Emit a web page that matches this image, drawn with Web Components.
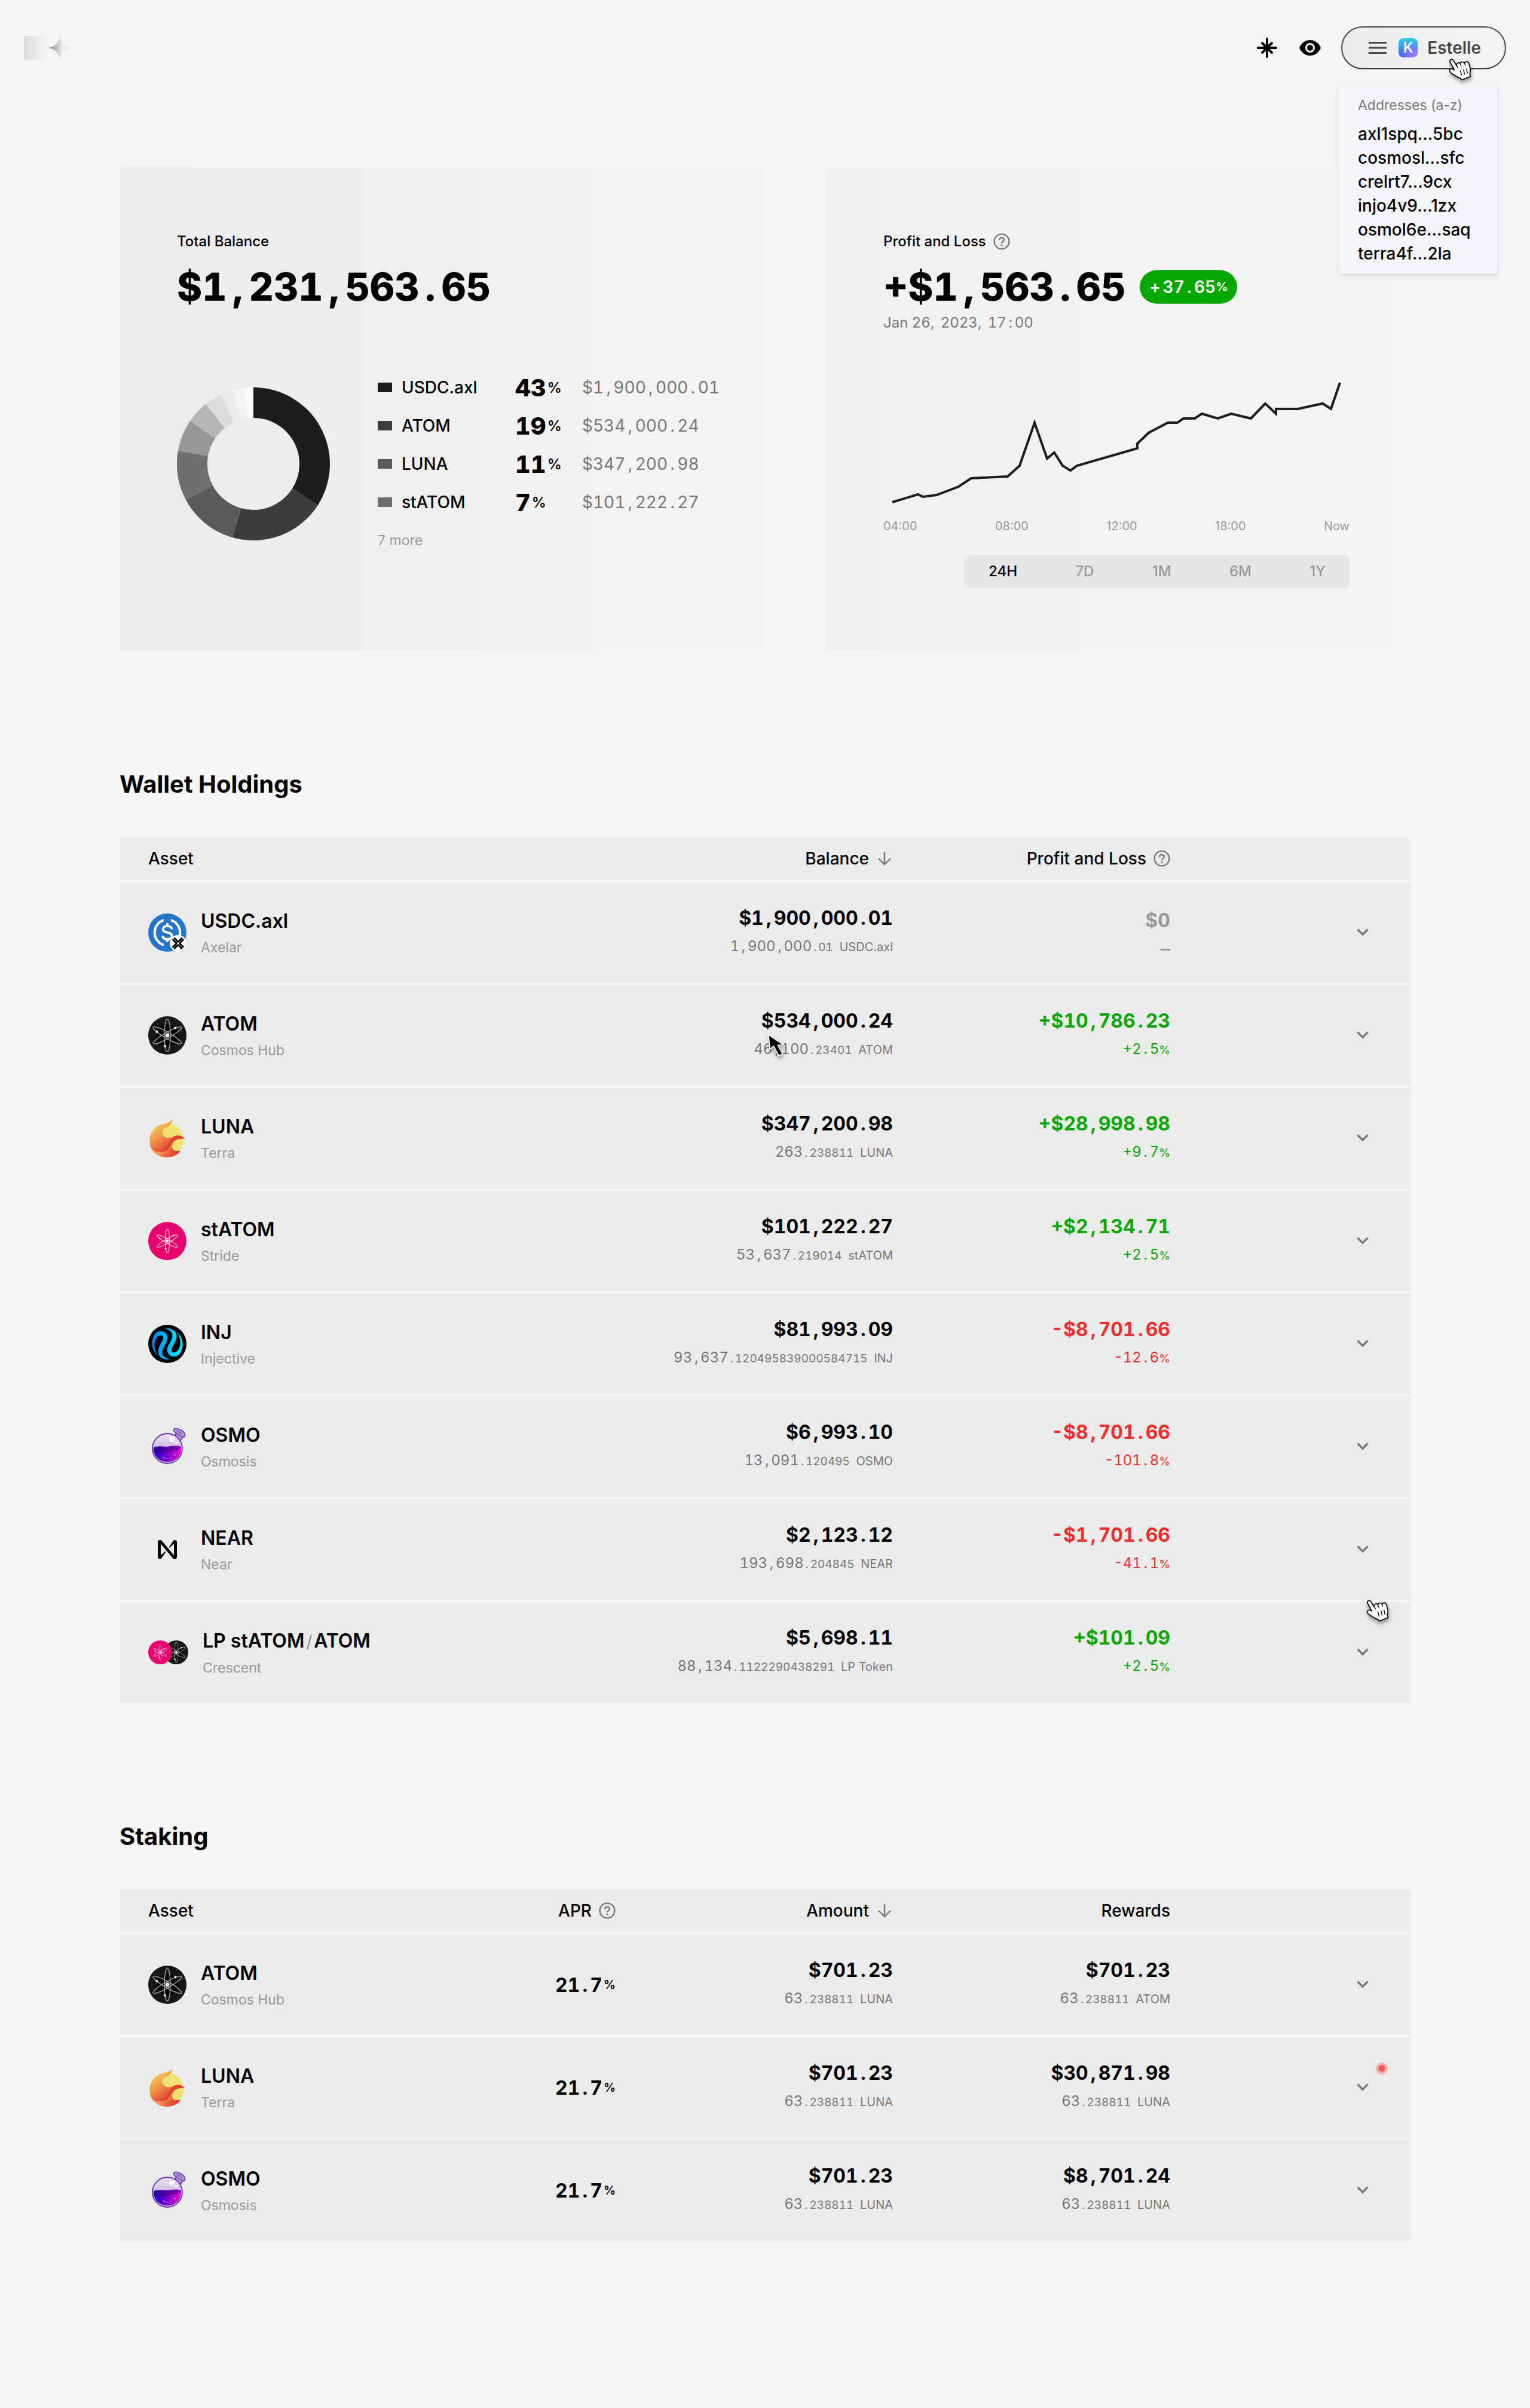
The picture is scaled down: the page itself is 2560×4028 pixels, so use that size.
<!DOCTYPE html>
<html lang="en">
<head>
<meta charset="utf-8">
<meta name="viewport" content="width=device-width, initial-scale=1">
<title>Portfolio dashboard</title>
<style>
  :root {
    --bg: #f5f5f5;
    --panel: #ebebeb;
    --ink: #000;
    --muted: #777;
    --faint: #999;
    --gain: #06a800;
    --loss: #f02d2a;
  }
  body {
    margin: 0;
    background: var(--bg);
    color: var(--ink);
    font-family: Inter, "Liberation Sans", sans-serif;
    font-size: 24px;
  }
</style>
</head>
<body>
<portfolio-page></portfolio-page>

<script>
const reset = `
  *, *::before, *::after { box-sizing: border-box; }
  button { font: inherit; color: inherit; background: none; border: 0; padding: 0; margin: 0; cursor: pointer; }
  svg { display: block; }
  h2, p, ul { margin: 0; padding: 0; }
  ul { list-style: none; }
  .num { font-variant-numeric: tabular-nums; }
  .p { padding: 0 .155em; }
`;

/* Gives points and commas the same cell width as a tabular digit. */
const cells = text => text.replace(/[.,]/g, `<span class="p">$&</span>`);

class BaseElement extends HTMLElement {
  constructor() {
    super();
    this.attachShadow({ mode: "open" });
  }
  connectedCallback() {
    this.shadowRoot.innerHTML = `<style>${reset}${this.css()}</style>${this.html()}`;
  }
  css() { return ""; }
  html() { return ""; }
}

/* ---------- small glyph icons ---------- */
const glyphs = {
  menu: `<svg width="30" height="20" viewBox="0 0 30 20" stroke="currentColor" stroke-width="3"><path d="M0 1.5h30M0 10h30M0 18.5h30"/></svg>`,
  spark: `<svg width="36" height="36" viewBox="0 0 36 36" stroke="currentColor" stroke-width="4" stroke-linecap="round"><path d="M18 3v30M3 18h30M10 10l16 16M26 10L10 26"/></svg>`,
  eye: `<svg width="36" height="26" viewBox="0 0 36 26"><path fill="currentColor" d="M18 0C27 0 33 6 36 13C33 20 27 26 18 26S3 20 0 13C3 6 9 0 18 0z"/><circle cx="18" cy="13" r="8" fill="#f5f5f5"/><circle cx="18" cy="13" r="5" fill="currentColor"/></svg>`,
  help: `<svg width="28" height="28" viewBox="0 0 28 28" fill="none" stroke="currentColor" stroke-width="2.4"><circle cx="14" cy="14" r="12.4"/><path d="M10.2 11.4c0-2.3 1.6-3.7 3.8-3.7s3.8 1.3 3.8 3.4c0 2.8-3.7 2.9-3.7 6"/><circle cx="14.1" cy="20.2" r="1.5" fill="currentColor" stroke="none"/></svg>`,
  down: `<svg width="28" height="28" viewBox="0 0 28 28" fill="none" stroke="currentColor" stroke-width="2.4"><path d="M14 3v20M4 14l10 10 10-10"/></svg>`,
  chevron: `<svg width="20" height="14" viewBox="0 0 20 14" fill="none" stroke="currentColor" stroke-width="3.4"><path d="M1.5 1.5l8.500 8.600L18.500 1.500"/></svg>`,
  hand: `<svg width="38" height="38" viewBox="0 0 114 114" overflow="visible"><path fill="#fff" stroke="#000" stroke-width="5" stroke-linejoin="round" d="M7 18C2 6 16-1 23 9L40 36C37 24 51 15 58 25C59 15 73 13 79 23C83 12 98 13 101 24L108 50C111 62 105 72 106 81L110 90L64 107L59 98C46 96 30 83 18 77C8 70 3 63 5 57C9 49 20 51 28 57z"/><path stroke="#000" stroke-width="4" d="M40 34l7 14M58 25l5 14M79 22l4 13M58 58l7 26M74 54l6 26M89 50l5 25"/></svg>`,
  arrow: `<svg width="28" height="38" viewBox="0 0 28 38" overflow="visible"><path fill="#000" stroke="#fff" stroke-width="1.600" stroke-linejoin="round" d="M1 1L3 25L9.500 20L18 36L24.500 33L16.500 18.500L26 17.500z"/></svg>`
};

customElements.define("ui-glyph", class extends BaseElement {
  css() { return `:host { display: inline-flex; flex: none; align-items: center; justify-content: center; }`; }
  html() { return glyphs[this.getAttribute("name")]; }
});

/* Pointer drawn over the page content. */
customElements.define("ui-pointer", class extends BaseElement {
  css() { return `:host { position: absolute; z-index: 5; pointer-events: none; filter: drop-shadow(1px 4px 3px rgba(0,0,0,.4)); }`; }
  html() { return glyphs[this.getAttribute("name")]; }
});

/* ---------- token logos, drawn on a 64-unit grid ---------- */
const atomLogo = (bg, core, line, ry, rx, w) => `
  <circle cx="32" cy="32" r="32" fill="${bg}"/>
  <circle cx="32" cy="32" r="18.500" fill="${core}"/>
  <g fill="none" stroke="${line}" stroke-width="${w}">
    <ellipse cx="32" cy="32" rx="${rx}" ry="${ry}"/>
    <ellipse cx="32" cy="32" rx="${rx}" ry="${ry}" transform="rotate(60 32 32)"/>
    <ellipse cx="32" cy="32" rx="${rx}" ry="${ry}" transform="rotate(120 32 32)"/>
  </g>
  <g fill="#fff" transform="translate(32 32) scale(${ry / 27.5})">
    <circle r="3.400"/><circle cx="-17.700" cy="-6" r="2"/><circle cx="13.400" cy="-12.600" r="2"/><circle cx="-4" cy="18" r="2"/>
  </g>`;
const injHalf = `M17 52.500C9 46 6.500 38 6.500 31C7 18 13 10.700 21 10.700C28 10.700 32.500 16 32.300 22C32 31 24 36 23.500 46C23.500 52 28 56 36.500 57.500C26 60 16.500 54 16.500 45C17 33 25 29 25 21.500C25 18.500 23 17.500 20.500 17.700C14 18 9.500 27 10.500 36C11 43 13 48 17 52.500z`;
const tokens = {
  usdc: `<circle cx="32" cy="32" r="32" fill="#2775ca"/>
    <g fill="none" stroke="#fff" stroke-width="4">
      <path d="M26 11.200A21.800 21.800 0 0 0 26 52.800M38 11.200A21.800 21.800 0 0 1 38 52.800"/>
      <path d="M39.400 26.500C39.400 23 36.500 21 32 21S24.700 23.200 24.700 26.400C24.700 30 28 31 32 31.800S39.800 33.700 39.800 37.700C39.800 41.300 36.400 43 32 43S24.200 41.300 24.200 37.500M32 16v5M32 43v5"/>
    </g>
    <circle cx="50" cy="50.600" r="14.400" fill="#000" opacity=".12"/>
    <circle cx="50" cy="50" r="14" fill="#fff"/>
    <path d="M42 42l16 16M58 42L42 58" stroke="#000" stroke-width="6.500" fill="none"/>
    <path d="M41 41l18 18M59 41L41 59" stroke="#fff" stroke-width=".8" fill="none"/>
    <circle cx="50" cy="50" r="1.400" fill="#fff"/>`,
  atom: atomLogo("#171717", "#000", "#a9a9a9", 27.5, 5, 1.4),
  statom: atomLogo("#e6056f", "#e6056f", "#ffd3e8", 20, 3.7, 1.1),
  luna: `<defs>
      <linearGradient id="la" x1="8" y1="10" x2="36" y2="52" gradientUnits="userSpaceOnUse"><stop offset="0" stop-color="#f6cf5c"/><stop offset=".5" stop-color="#ef8f45"/><stop offset="1" stop-color="#e03131"/></linearGradient>
      <linearGradient id="lb" x1="22" y1="50" x2="40" y2="64" gradientUnits="userSpaceOnUse"><stop offset="0" stop-color="#f19a50"/><stop offset="1" stop-color="#e4402f"/></linearGradient>
    </defs>
    <circle cx="31" cy="35.500" r="28.300" fill="#f2e272"/>
    <path fill="url(#la)" d="M39.500 0C38 5 29 7 20 9.500C9 14 2.300 24 2.300 36C2.300 42 3.500 47 6.500 51.500C14 57 25 56 30 53C36 49 38 40 45 35.500C50 33 56 32 61.500 33C57 28 49 26 44 28.500C38 32 30 32 26.500 28.500C22 24 23 18 28 15C33 12.500 42 9 39.500 0z"/>
    <path fill="url(#lb)" d="M6.500 51.500C14 57 25 56 30 53C36 49 38 41 44 36C38 43 39 53 47 53C50 53 52 53 54.500 52.200C50 60 40 64 31 64C20 64 11.500 59 6.500 51.500z"/>
    <path fill="#e0332f" opacity=".6" d="M32 44C36 36 40 31 45 28C50 26 57 28 61.500 33C56 32 50 33 45 35.500C38 40 36 49 30 53z"/>`,
  inj: `<defs><linearGradient id="ig" x1="6" y1="32" x2="58" y2="32" gradientUnits="userSpaceOnUse"><stop offset="0" stop-color="#0082ff"/><stop offset="1" stop-color="#00f2fe"/></linearGradient></defs>
    <circle cx="32" cy="32" r="32"/>
    <path fill="url(#ig)" d="${injHalf}"/>
    <mask id="im"><path d="${injHalf}" fill="#fff" transform="rotate(180 32 32)"/></mask>
    <rect width="64" height="64" fill="url(#ig)" mask="url(#im)"/>`,
  osmo: `<defs>
      <linearGradient id="og" x1="0" x2="1"><stop offset="0" stop-color="#1500d6"/><stop offset=".5" stop-color="#7a06cd"/><stop offset="1" stop-color="#f000c8"/></linearGradient>
      <linearGradient id="oh" x1="0" y1="0" x2="0" y2="1"><stop offset="0" stop-color="#efe6f8"/><stop offset="1" stop-color="#a78cc8"/></linearGradient>
      <linearGradient id="ok" x1="0" x2="1"><stop offset="0" stop-color="#25009c"/><stop offset="1" stop-color="#8a00b0"/></linearGradient>
    </defs>
    <path d="M44 1.500C49 0 60 6 61.500 11C62.500 15 59.500 17 57.500 15.500L54 22L44 16L46.500 9C43 8 41 4 44 1.500z" fill="#b39ad4" stroke="#6b2fb0" stroke-width="1.600" stroke-linejoin="round"/>
    <path d="M46 4C50 4 57 8 58.500 12C54 11 48 8 46 4z" fill="#8d6bbd"/>
    <path d="M46.500 9C50 12 54 14.500 57.500 15.500" fill="none" stroke="#6b2fb0" stroke-width="1.400"/>
    <circle cx="32" cy="35" r="25" fill="url(#oh)" stroke="#6b2fb0" stroke-width="1.800"/>
    <path fill="url(#og)" d="M9 33C16 31 22 32 30 34C40 35 47 31 55 33C56 47 46 57 32 57S8.500 47 9 33z"/>
    <path fill="url(#ok)" d="M9 33C16 31 22 31 30 32C40 31 47 29 55 32C52 41 42 37 34 41C24 45 13 43 9 39z"/>
    <path fill="none" stroke="#b9a9cf" stroke-width="1.600" opacity=".8" d="M16 53C24 60 40 60 48 53"/>
    <circle cx="39.500" cy="20" r="4" fill="#fff"/><circle cx="46.500" cy="25.500" r="1.900" fill="#fff"/>
    <g fill="#c77cf2" opacity=".6"><circle cx="26.500" cy="50.500" r="1.900"/><circle cx="44.500" cy="45.500" r="2"/><circle cx="31.500" cy="52" r="1.200"/><circle cx="38" cy="51" r="1.200"/><circle cx="35" cy="54" r="1"/></g>`,
  near: `<path transform="translate(16 16) scale(.356)" d="M72.200 4.600L53.400 32.500c-1.300 1.900 1.200 4.200 3 2.600L74.900 19c.5-.4 1.200-.1 1.200.6v50.300c0 .7-.9 1-1.300.5l-56-67C17 1.200 14.400 0 11.500 0h-2C4.300 0 0 4.300 0 9.600v70.800C0 85.700 4.300 90 9.600 90c3.300 0 6.400-1.700 8.200-4.600l18.800-27.900c1.300-1.900-1.200-4.200-3-2.600l-18.500 16c-.5.4-1.200.1-1.200-.6V20.100c0-.7.9-1 1.300-.5l56 67c1.800 2.200 4.500 3.400 7.300 3.400h2c5.300 0 9.600-4.300 9.600-9.600V9.600c0-5.300-4.300-9.600-9.600-9.600C77.100 0 74 1.700 72.200 4.600z"/>`
};

customElements.define("token-icon", class extends BaseElement {
  css() {
    return `:host { display: flex; flex: none; width: 64px; height: 64px; }
      :host([small]) { width: 40px; height: 40px; }
      svg { width: 100%; height: 100%; }`;
  }
  html() { return `<svg viewBox="0 0 64 64" aria-hidden="true">${tokens[this.getAttribute("name")]}</svg>`; }
});

/* ---------- header ---------- */
customElements.define("brand-logo", class extends BaseElement {
  css() { return `:host { display: block; }`; }
  html() {
    return `<svg width="80" height="40" viewBox="0 0 80 40" role="img" aria-label="Home">
      <defs>
        <linearGradient id="a"><stop offset="0" stop-color="#dcdcdc"/><stop offset="1" stop-color="#f5f5f5"/></linearGradient>
        <linearGradient id="b"><stop offset="0" stop-color="#858585"/><stop offset=".35" stop-color="#bebebe"/><stop offset=".66" stop-color="#f5f5f5"/><stop offset=".68" stop-color="#eee"/><stop offset="1" stop-color="#e0e0e0"/></linearGradient>
      </defs>
      <path fill="url(#a)" d="M0 0h40v40H0z"/>
      <path fill="url(#b)" d="M60 0A22 22 0 0 0 80 20A22 22 0 0 0 60 40A22 22 0 0 0 40 20A22 22 0 0 0 60 0z"/>
    </svg>`;
  }
});

customElements.define("user-menu", class extends BaseElement {
  css() {
    return `:host { display: block; position: relative; }
      .trigger { display: flex; align-items: center; height: 72px; padding: 0 40px 0 44px; gap: 16px;
        border: 2px solid #444; border-radius: 36px; color: #484848;
        background: linear-gradient(90deg, #ebebeb, #f5f5f5); font-size: 28px; font-weight: 600; }
      .trigger ui-glyph { padding-right: 4px; }
      .badge { width: 32px; height: 32px; border-radius: 8px; color: #fff; font-size: 24px; line-height: 32px; text-align: center;
        background: radial-gradient(circle at 90% 100%, #a67bff, transparent 60%), linear-gradient(180deg, #2fd0e6, #3f8bf5 55%, #4a5ff0); }
      .menu { position: absolute; top: 96px; right: 14px; width: 266px; padding: 20px 32px 14px;
        border-radius: 6px; background: #f4f5f8; box-shadow: 1px 2px 0 #dddee0, 0 3px 8px rgba(0,0,0,.09); }
      .menu p { font-size: 23px; line-height: 32px; color: var(--muted); padding-bottom: 12px; }
      .menu li { font-size: 28px; line-height: 40px; font-weight: 500; }
      ui-pointer { right: 58px; top: 54px; }`;
  }
  html() {
    const list = ["axl1spq...5bc", "cosmosl...sfc", "crelrt7...9cx", "injo4v9...1zx", "osmol6e...saq", "terra4f...2la"];
    return `<button class="trigger" aria-haspopup="true" aria-expanded="true"><ui-glyph name="menu"></ui-glyph><span class="badge">K</span><span>Estelle</span></button>
      <div class="menu"><p>Addresses (a-z)</p><ul>${list.map(a => `<li>${a}</li>`).join("")}</ul></div>
      <ui-pointer name="hand"></ui-pointer>`;
  }
});

customElements.define("page-header", class extends BaseElement {
  css() {
    return `:host { display: block; }
      header { display: flex; align-items: center; justify-content: space-between; padding: 44px 40px; }
      nav, .tools { display: flex; align-items: center; }
      nav { gap: 34px; position: relative; z-index: 2; }
      .tools { gap: 36px; }
      .tools button { display: flex; }`;
  }
  html() {
    return `<header><brand-logo></brand-logo><nav><div class="tools">
      <button aria-label="Theme"><ui-glyph name="spark"></ui-glyph></button>
      <button aria-label="Show balances"><ui-glyph name="eye"></ui-glyph></button></div>
      <user-menu></user-menu></nav></header>`;
  }
});

/* ---------- summary cards ---------- */
const cardCss = `
  :host { display: block; border-radius: 8px; padding: 104px 96px; }
  .label { display: flex; align-items: center; gap: 12px; font-size: 24px; line-height: 40px; font-weight: 500; }
  .label ui-glyph { color: var(--muted); }
  .total { display: flex; align-items: center; gap: 24px; margin-top: 16px; font-size: 64px; line-height: 80px; font-weight: 800; }
`;

customElements.define("donut-chart", class extends BaseElement {
  css() { return `:host { display: block; flex: none; width: 256px; height: 256px; } svg { width: 100%; height: 100%; }`; }
  html() {
    const stops = [0, 122.7, 195.9, 242.1, 279.9, 304, 321.6, 334.6, 344, 352.8, 360];
    const colors = ["#1d1d1d", "#3c3c3c", "#5a5a5a", "#6f6f6f", "#979797", "#b6b6b6", "#dcdcdc", "#ebebeb", "#f3f3f3", "#fbfbfb"];
    const pt = (deg, r) => {
      const t = deg * Math.PI / 180;
      return `${(128 + r * Math.sin(t)).toFixed(2)} ${(128 - r * Math.cos(t)).toFixed(2)}`;
    };
    return `<svg viewBox="0 0 256 256" role="img" aria-label="Balance split">${colors.map((c, i) =>
      `<path fill="${c}" d="M${pt(stops[i], 128)}A128 128 0 0 1 ${pt(stops[i + 1], 128)}L${pt(stops[i + 1], 77)}A77 77 0 0 0 ${pt(stops[i], 77)}z"/>`).join("")}</svg>`;
  }
});

customElements.define("balance-card", class extends BaseElement {
  css() {
    return `${cardCss}
      :host { background: linear-gradient(90deg, #ebebeb, #f5f5f5); }
      .split { display: flex; align-items: center; gap: 80px; margin-top: 96px; }
      li { display: grid; grid-template-columns: 24px 174px 96px auto; column-gap: 16px; align-items: center; height: 64px; font-size: 28px; font-weight: 500; }
      i { height: 16px; }
      .pct { display: flex; align-items: center; gap: 2px; font-size: 40px; font-weight: 800; }
      .pct small { font-size: 24px; font-weight: 600; }
      .val { color: var(--muted); font-weight: 400; }
      .more { color: var(--faint); font-size: 23px; line-height: 64px; display: block; }`;
  }
  html() {
    const rows = [["USDC.axl", 43, "$1,900,000.01", "#1d1d1d"], ["ATOM", 19, "$534,000.24", "#3c3c3c"], ["LUNA", 11, "$347,200.98", "#5a5a5a"], ["stATOM", 7, "$101,222.27", "#6f6f6f"]];
    return `<div class="label">Total Balance</div><div class="total num"><span>${cells("$1,231,563.65")}</span></div>
      <div class="split"><donut-chart></donut-chart><div><ul>${rows.map(([n, p, v, c]) =>
        `<li><i style="background:${c}"></i><span>${n}</span><span class="pct num">${p}<small>%</small></span><span class="val num">${cells(v)}</span></li>`).join("")}</ul>
      <button class="more">7 more</button></div></div>`;
  }
});

customElements.define("trend-chart", class extends BaseElement {
  css() {
    return `:host { display: block; }
      svg { width: 100%; height: auto; overflow: visible; }
      .axis { display: flex; justify-content: space-between; margin-top: 20px; font-size: 20px; line-height: 32px; color: var(--faint); }`;
  }
  html() {
    return `<svg viewBox="0 0 780 208" role="img" aria-label="Profit and loss over 24 hours"><polyline fill="none" stroke="#1d1d1d" stroke-width="4" points="15,204 58,191 66,195 89,192 126,178 147,164 208,161 228,143 253,71 274,131 286,121 300,143 313,151 324,143 425,114 425,106 444,88 476,71 492,71 502,64 521,64 533,56 560,64 582,56 615,64 639,39 657,56 657,48 694,48 735,39 749,48 764,4"/></svg>
      <div class="axis"><span>04:00</span><span>08:00</span><span>12:00</span><span>18:00</span><span>Now</span></div>`;
  }
});

customElements.define("range-switch", class extends BaseElement {
  css() {
    return `:host { display: flex; justify-content: space-between; width: 644px; padding: 0 40px; border-radius: 8px; background: #e6e6e6; }
      button { font-size: 24px; line-height: 56px; font-weight: 500; color: var(--faint); }
      button[aria-pressed="true"] { color: var(--ink); }`;
  }
  html() {
    return ["24H", "7D", "1M", "6M", "1Y"].map((t, i) => `<button aria-pressed="${i === 0}">${t}</button>`).join("");
  }
});

customElements.define("profit-card", class extends BaseElement {
  css() {
    return `${cardCss}
      :host { background: linear-gradient(90deg, #f0f0f0, #f5f5f5); }
      .pill { display: flex; align-items: center; height: 56px; padding: 0 16px; border-radius: 28px; background: var(--gain); color: #fff; font-size: 28px; line-height: 56px; font-weight: 600; }
      .pill small { font-size: 20px; }
      .plus { padding-right: 4px; }
      .date { margin-top: 4px; font-size: 24px; line-height: 32px; color: var(--muted); }
      .date .s { padding-right: .16em; }
      .plot { display: flex; flex-direction: column; max-width: 780px; margin-top: 80px; }
      range-switch { align-self: flex-end; margin-top: 32px; }`;
  }
  html() {
    return `<div class="label">Profit and Loss <ui-glyph name="help"></ui-glyph></div>
      <div class="total num"><span>${cells("+$1,563.65")}</span><span class="pill"><span class="plus">+</span><span>${cells("37.65")}</span><small>%</small></span></div>
      <p class="date num">Jan 26<span class="s">,</span> 2023<span class="s">,</span> 17<span class="p">:</span>00</p>
      <div class="plot"><trend-chart></trend-chart><range-switch></range-switch></div>`;
  }
});

/* ---------- tables ---------- */
customElements.define("token-amount", class extends BaseElement {
  css() {
    return `:host { display: block; color: var(--muted); font-size: 24px; line-height: 46px; font-weight: 400; white-space: nowrap; }
      .part { font-size: 19px; }
      .unit { font-size: 20px; padding-left: 5px; }`;
  }
  html() {
    return `<span class="num">${cells(this.getAttribute("whole"))}<small class="part">${cells("." + this.getAttribute("part"))}</small></span><small class="unit"> ${this.getAttribute("unit")}</small>`;
  }
});

customElements.define("asset-label", class extends BaseElement {
  css() {
    return `:host { display: flex; align-items: center; gap: 24px; }
      .icons { display: flex; }
      .icons token-icon:first-child { position: relative; z-index: 1; }
      .icons token-icon[small] + token-icon { margin-left: -13px; }
      .text { padding-top: 4px; }
      .name { font-size: 32px; line-height: 46px; font-weight: 600; white-space: nowrap; }
      .name i { font-style: normal; font-weight: 300; color: var(--muted); font-size: 28px; padding: 0 3px; }
      .chain { font-size: 23px; line-height: 42px; font-weight: 400; color: var(--faint); }`;
  }
  html() {
    const icons = this.getAttribute("icons").split(" ");
    const small = icons.length > 1 ? "small" : "";
    const name = this.getAttribute("name").replace("/", "<i>/</i>");
    return `<div class="icons">${icons.map(i => `<token-icon name="${i}" ${small}></token-icon>`).join("")}</div>
      <div class="text"><div class="name">${name}</div><div class="chain">${this.getAttribute("chain")}</div></div>`;
  }
});

const tableCss = `
  :host { display: block; }
  table { width: 100%; border-collapse: separate; border-spacing: 0; table-layout: fixed; }
  .c { width: 464px; }
  .e { width: 402px; }
  th, td { background: var(--panel); padding: 0; text-align: right; font-weight: 500; }
  th { height: 72px; font-size: 28px; }
  th:first-child { border-top-left-radius: 8px; }
  th:last-child { border-top-right-radius: 8px; }
  th:first-child, td:first-child { text-align: left; padding-left: 48px; }
  th > span, th button { display: inline-flex; align-items: center; gap: 12px; font-weight: 500; }
  th ui-glyph { color: var(--muted); }
  td { position: relative; height: 172px; border-top: 4px solid var(--bg); vertical-align: middle; }
  td:last-child { padding-right: 48px; }
  .main { font-size: 32px; line-height: 48px; font-weight: 700; }
  .main .p { padding: 0 .13em; }
  .rate { font-size: 24px; line-height: 46px; font-weight: 400; }
  .rate small { font-size: 19px; }
  .flat { color: var(--faint); }
  .flat .main { line-height: 54px; }
  .flat .rate { font-size: 32px; line-height: 40px; font-weight: 500; }
  .up { color: var(--gain); }
  .down { color: var(--loss); }
  .apr div { display: flex; align-items: center; justify-content: flex-end; gap: 2px; font-size: 32px; font-weight: 700; }
  .apr .p { padding: 0 .13em; }
  .apr small { font-size: 20px; font-weight: 600; }
  .open { display: inline-flex; width: 64px; height: 64px; align-items: center; justify-content: center; vertical-align: middle; color: var(--muted); }
`;
const openCell = extra => `<td><button class="open" aria-label="Show details"><ui-glyph name="chevron"></ui-glyph></button>${extra || ""}</td>`;
const money = (value, whole, part, unit) => `<div class="main num">${cells(value)}</div><token-amount whole="${whole}" part="${part}" unit="${unit}"></token-amount>`;
const asset = (icons, name, chain) => `<asset-label icons="${icons}" name="${name}" chain="${chain}"></asset-label>`;

customElements.define("holdings-table", class extends BaseElement {
  css() { return `${tableCss} .on-amount { right: 181px; top: 82px; } .on-open { right: 36px; top: -4px; }`; }
  html() {
    const rows = [
      ["usdc", "USDC.axl", "Axelar", "$1,900,000.01", "1,900,000", "01", "USDC.axl", "flat", "$0", "–"],
      ["atom", "ATOM", "Cosmos Hub", "$534,000.24", "46,100", "23401", "ATOM", "up", "+$10,786.23", "+2.5"],
      ["luna", "LUNA", "Terra", "$347,200.98", "263", "238811", "LUNA", "up", "+$28,998.98", "+9.7"],
      ["statom", "stATOM", "Stride", "$101,222.27", "53,637", "219014", "stATOM", "up", "+$2,134.71", "+2.5"],
      ["inj", "INJ", "Injective", "$81,993.09", "93,637", "120495839000584715", "INJ", "down", "-$8,701.66", "-12.6"],
      ["osmo", "OSMO", "Osmosis", "$6,993.10", "13,091", "120495", "OSMO", "down", "-$8,701.66", "-101.8"],
      ["near", "NEAR", "Near", "$2,123.12", "193,698", "204845", "NEAR", "down", "-$1,701.66", "-41.1"],
      ["statom atom", "LP stATOM/ATOM", "Crescent", "$5,698.11", "88,134", "1122290438291", "LP Token", "up", "+$101.09", "+2.5"]
    ];
    const body = rows.map((r, i) => `<tr>
      <td>${asset(r[0], r[1], r[2])}</td>
      <td>${money(r[3], r[4], r[5], r[6])}${i === 1 ? `<ui-pointer class="on-amount" name="arrow"></ui-pointer>` : ""}</td>
      <td class="${r[7]}"><div class="main num">${cells(r[8])}</div><div class="rate num">${cells(r[9])}${r[7] === "flat" ? "" : "<small>%</small>"}</div></td>
      ${openCell(i === 7 ? `<ui-pointer class="on-open" name="hand"></ui-pointer>` : "")}</tr>`).join("");
    return `<table><colgroup><col><col class="c"><col class="c"><col class="e"></colgroup>
      <thead><tr><th>Asset</th><th><button>Balance <ui-glyph name="down"></ui-glyph></button></th><th><span>Profit and Loss <ui-glyph name="help"></ui-glyph></span></th><th></th></tr></thead>
      <tbody>${body}</tbody></table>`;
  }
});

customElements.define("staking-table", class extends BaseElement {
  css() {
    return `${tableCss}
      .dot { position: absolute; right: 38px; top: 42px; width: 20px; height: 20px; border-radius: 50%; border: 4px solid #f4b0ab; background: #ef5b50; background-clip: padding-box; }`;
  }
  html() {
    const rows = [
      ["atom", "ATOM", "Cosmos Hub", "$701.23", "ATOM"],
      ["luna", "LUNA", "Terra", "$30,871.98", "LUNA"],
      ["osmo", "OSMO", "Osmosis", "$8,701.24", "LUNA"]
    ];
    const body = rows.map((r, i) => `<tr>
      <td>${asset(r[0], r[1], r[2])}</td>
      <td class="apr num"><div><span>${cells("21.7")}</span><small>%</small></div></td>
      <td>${money("$701.23", "63", "238811", "LUNA")}</td>
      <td>${money(r[3], "63", "238811", r[4])}</td>
      ${openCell(i === 1 ? `<span class="dot"></span>` : "")}</tr>`).join("");
    return `<table><colgroup><col><col class="c"><col class="c"><col class="c"><col class="e"></colgroup>
      <thead><tr><th>Asset</th><th><span>APR <ui-glyph name="help"></ui-glyph></span></th><th><button>Amount <ui-glyph name="down"></ui-glyph></button></th><th>Rewards</th><th></th></tr></thead>
      <tbody>${body}</tbody></table>`;
  }
});

customElements.define("page-section", class extends BaseElement {
  css() {
    return `:host { display: block; margin-top: 200px; }
      h2 { font-size: 40px; line-height: 48px; font-weight: 700; margin-bottom: 64px; }`;
  }
  html() { return `<section><h2>${this.getAttribute("heading")}</h2><slot></slot></section>`; }
});

customElements.define("portfolio-page", class extends BaseElement {
  css() {
    return `:host { display: block; }
      main { padding: 120px 200px 280px; }
      .cards { display: grid; grid-template-columns: 1102fr 978fr; gap: 80px; }`;
  }
  html() {
    return `<page-header></page-header><main>
      <div class="cards"><balance-card></balance-card><profit-card></profit-card></div>
      <page-section heading="Wallet Holdings"><holdings-table></holdings-table></page-section>
      <page-section heading="Staking"><staking-table></staking-table></page-section></main>`;
  }
});
</script>
</body>
</html>
